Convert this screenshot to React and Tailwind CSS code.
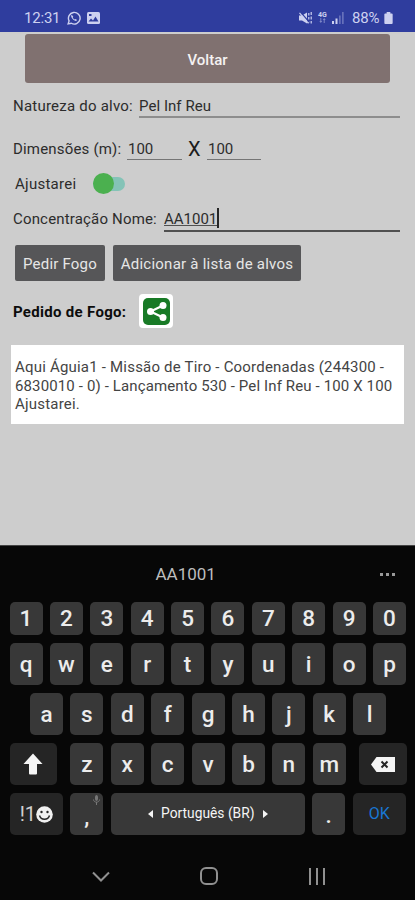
const numberRow = ["1", "2", "3", "4", "5", "6", "7", "8", "9", "0"];
const topRow = ["q", "w", "e", "r", "t", "y", "u", "i", "o", "p"];
const homeRow = ["a", "s", "d", "f", "g", "h", "j", "k", "l"];
const bottomRow = ["z", "x", "c", "v", "b", "n", "m"];

function Key({ children, className = "w-[33px] bg-[#383838]" }) {
  return (
    <div className={`flex h-full shrink-0 items-center justify-center rounded-[5px] text-[22.500px] leading-none font-medium text-[#ececec] ${className}`}>
      {children}
    </div>
  );
}

function StatusBar() {
  return (
    <header className="flex h-8 items-center bg-[#2f3d9e] pt-[3px] pl-6 text-[#cdd1f0]">
      <span className="w-[43px] pt-px text-[15px] leading-none tracking-[-0.200px]">12:31</span>
      <svg className="h-[14px] w-[14px]" viewBox="0 0 24 24" fill="none" stroke="currentColor" strokeWidth="2.4">
        <path d="M2 22l1.6-5A10 10 0 1 1 7.4 21Z" />
        <path d="M8.2 6.5 7 8.3c.3 4.200 4.300 8.300 8.500 8.700l1.800-1.500-2.800-2-1.300 1.100c-1.500-.6-2.700-1.900-3.400-3.400l1-1.300Z" fill="currentColor" stroke="none" />
      </svg>
      <svg className="ml-[6px] h-[12px] w-[13px]" viewBox="0 0 13 12">
        <rect width="13" height="12" rx="1.500" fill="currentColor" />
        <path d="M1.500 9.500 4 6.500l2 2 2.500-4 3 5Z" fill="#2f3d9e" />
        <rect x="2" y="2" width="2.500" height="2" fill="#2f3d9e" />
      </svg>
      <svg className="ml-[199px] h-[12px] w-[13px]" viewBox="0 0 13 12" fill="currentColor">
        <path d="M0 3.500h3L8 .5v11L3 8.500H0Z" />
        <path d="M9 1h1.500v2.500H9zM9 5h1.500v2.500H9zM9 9h1.500v2H9zM11.500 0H13v3h-1.500zM11.500 4.500H13v3h-1.500zM11.500 9H13v2.500h-1.500z" opacity=".8" />
        <path d="m1.500 0 9 10.500" stroke="#2f3d9e" strokeWidth="1.200" />
        <path d="m.5 .8 9 10.500" stroke="currentColor" strokeWidth="1.200" />
      </svg>
      <div className="ml-[6px] flex w-[9px] flex-col items-center">
        <span className="text-[7px] leading-[6px] font-bold">4G</span>
        <svg className="h-[5px] w-[7px] opacity-50" viewBox="0 0 7 5" fill="currentColor">
          <path d="M1.300 0h1v3h1L1.800 5 .3 3h1zM4.700 5h1V2h1L5.200 0 3.700 2h1z" />
        </svg>
      </div>
      <svg className="ml-[5px] h-[12px] w-[12px]" viewBox="0 0 12 12" fill="currentColor">
        <path d="M0 9h2v3H0zM3.500 6.500h2V12h-2z" />
        <path d="M7 3.500h1.700V12H7zM10 0h1.700v12H10z" opacity=".35" />
      </svg>
      <span className="ml-[8px] w-[32px] pt-px text-[15px] leading-none tracking-[-0.200px]">88%</span>
      <svg className="h-[12px] w-[9px]" viewBox="0 0 9 13" fill="currentColor">
        <path d="M2.500 0h4v1.500H8A1 1 0 0 1 9 2.500V12a1 1 0 0 1-1 1H1a1 1 0 0 1-1-1V2.500a1 1 0 0 1 1-1h1.500Z" />
      </svg>
    </header>
  );
}

function TargetForm() {
  return (
    <main className="h-[513px] bg-[#cdcdcd] pt-[2px] text-[15px] leading-[22px] text-[#2c2c2c]">
      <button className="ml-[25px] block h-[49px] w-[365px] rounded-[3px] bg-[#807170] pt-[3px] text-[15px] font-medium text-[#f5f2f2]">Voltar</button>

      <div className="mt-[12px] flex h-[23px] pl-[13px]">
        <span className="w-[126px] tracking-[0.220px] whitespace-nowrap">Natureza do alvo:</span>
        <div className="h-[23px] w-[261px] border-b-2 border-[#8d8d8d] tracking-[0.050px]">Pel Inf Reu</div>
      </div>

      <div className="mt-[20px] flex h-[22px] pl-[13px]">
        <span className="w-[114px] tracking-[0.180px] whitespace-nowrap">Dimensões (m):</span>
        <div className="w-[55px] border-b border-[#757575] pl-[1px]">100</div>
        <span className="w-[25px] pl-[6px] text-[20px] text-[#1c1c1c]">X</span>
        <div className="w-[54px] border-b border-[#757575] pl-[1px]">100</div>
      </div>

      <div className="mt-[12px] flex h-[23px] items-center pl-[15px]">
        <span className="w-[78px] tracking-[0.260px]">Ajustarei</span>
        <div className="flex h-[14px] w-[32px] items-center rounded-full bg-[#84c3b7]">
          <div className="h-[21px] w-[21px] shrink-0 rounded-full bg-[#4bb04f]" />
        </div>
      </div>

      <div className="mt-[13px] flex h-[24px] pl-[13px]">
        <span className="w-[151px] tracking-[0.170px] whitespace-nowrap">Concentração Nome:</span>
        <div className="flex w-[236px] border-b-2 border-[#505050]">
          <span className="h-[18px] border-b border-[#505050]">AA1001</span>
          <span className="h-[20px] w-[1.500px] bg-[#262626]" />
        </div>
      </div>

      <div className="mt-[13px] flex h-[36px] gap-2 pl-[15px] text-[#e6e6e6]">
        <button className="w-[90px] rounded-[2px] bg-[#565658] pt-[2px] tracking-[0.200px] whitespace-nowrap">Pedir Fogo</button>
        <button className="w-[188px] rounded-[2px] bg-[#565658] pt-[2px] tracking-[0.240px] whitespace-nowrap">Adicionar à lista de alvos</button>
      </div>

      <div className="mt-[13px] flex h-[34px] items-center pl-[13px]">
        <span className="w-[126px] pt-[2px] font-bold tracking-[0.300px] whitespace-nowrap text-[#0c0c0c]">Pedido de Fogo:</span>
        <div className="flex h-[34px] w-[34px] items-center justify-center rounded-[4px] bg-white">
          <svg className="h-[27px] w-[27px]" viewBox="0 0 27 27">
            <rect width="27" height="27" rx="5" fill="#187a26" />
            <path d="M20 7.500 7.500 13.500 20 19.500" fill="none" stroke="#fff" strokeWidth="2.200" />
            <circle cx="20" cy="7.500" r="3.500" fill="#fff" />
            <circle cx="7.500" cy="13.500" r="3.500" fill="#fff" />
            <circle cx="20" cy="19.500" r="3.500" fill="#fff" />
          </svg>
        </div>
      </div>

      <div className="mt-[17px] ml-[11px] h-[79px] w-[393px] bg-white pt-[13px] pl-[4px] text-[15px] leading-[18.500px] whitespace-nowrap text-[#444]">
        <p className="tracking-[0.200px]">Aqui Águia1 - Missão de Tiro - Coordenadas (244300 -</p>
        <p className="tracking-[0.130px]">6830010 - 0) - Lançamento 530 - Pel Inf Reu - 100 X 100</p>
        <p className="tracking-[0.200px]">Ajustarei.</p>
      </div>
    </main>
  );
}

function Keyboard() {
  return (
    <section className="h-[355px] border-t border-[#444] bg-[#070707] pl-[9.500px]">
      <div className="flex h-[56px] items-center pt-px">
        <span className="ml-[146px] w-[224px] text-[17px] text-[#bdbdbd]">AA1001</span>
        <div className="flex gap-[3px] pb-px">
          <i className="h-[3px] w-[3px] bg-[#999]" />
          <i className="h-[3px] w-[3px] bg-[#999]" />
          <i className="h-[3px] w-[3px] bg-[#999]" />
        </div>
      </div>
      <div className="flex h-[33px] gap-[7.400px]">
        {numberRow.map((k) => <Key key={k}>{k}</Key>)}
      </div>
      <div className="mt-[8px] flex h-[42px] gap-[7.400px]">
        {topRow.map((k) => <Key key={k}>{k}</Key>)}
      </div>
      <div className="mt-[8px] flex h-[42px] gap-[7.400px] pl-[20.500px]">
        {homeRow.map((k) => <Key key={k}>{k}</Key>)}
      </div>
      <div className="mt-[8px] flex h-[42px] gap-[7.400px]">
        <Key className="mr-[6px] w-[47.500px] bg-[#252525]">
          <svg className="h-[22px] w-[20px]" viewBox="0 0 20 22" fill="#f5f5f5"><path d="M10 .5 19.500 11H14v9.500a1 1 0 0 1-1 1H7a1 1 0 0 1-1-1V11H.5Z" /></svg>
        </Key>
        {bottomRow.map((k) => <Key key={k}>{k}</Key>)}
        <Key className="ml-[6px] w-[47.500px] bg-[#252525]">
          <svg className="h-[15px] w-[24px]" viewBox="0 0 24 15">
            <path d="M0 7.500 5.500 0H24v15H5.500Z" fill="#f5f5f5" />
            <path d="m10.500 4.500 6 6m0-6-6 6" stroke="#252525" strokeWidth="2" />
          </svg>
        </Key>
      </div>
      <div className="mt-[8px] flex h-[42px] gap-[7.400px]">
        <Key className="w-[53.500px] bg-[#252525]">
          <span className="text-[20px] font-normal tracking-[-0.300px] text-[#d0d0d0]">!1</span>
          <svg className="h-[17px] w-[17px]" viewBox="0 0 17 17">
            <circle cx="8.500" cy="8.500" r="8.300" fill="#f0f0f0" />
            <circle cx="5.500" cy="6" r="1.200" fill="#252525" />
            <circle cx="11.500" cy="6" r="1.200" fill="#252525" />
            <path d="M3.500 9.500c1.500 5 8.500 5 10 0" fill="none" stroke="#252525" strokeWidth="1.500" />
          </svg>
        </Key>
        <Key className="relative w-[33px] bg-[#383838]">
          <span className="pt-[6px]">,</span>
          <svg className="absolute top-[2px] right-[3px] h-[10px] w-[7px]" viewBox="0 0 7 10" fill="none" stroke="#777">
            <rect x="2.500" y=".5" width="2" height="5" rx="1" fill="#777" />
            <path d="M.5 4.500C.5 8 6.500 8 6.500 4.500M3.500 7v3" />
          </svg>
        </Key>
        <Key className="w-[194px] gap-[8px] bg-[#383838]">
          <svg className="h-[8px] w-[5px]" viewBox="0 0 5 8" fill="#f5f5f5"><path d="M5 0v8L0 4Z" /></svg>
          <span className="text-[13.800px] font-normal text-[#f5f5f5]">Português (BR)</span>
          <svg className="h-[8px] w-[5px]" viewBox="0 0 5 8" fill="#f5f5f5"><path d="M0 0v8l5-4Z" /></svg>
        </Key>
        <Key><span className="pt-[3px]">.</span></Key>
        <Key className="w-[53.500px] bg-[#252525]"><span className="text-[16px] font-normal text-[#1976d2]">OK</span></Key>
      </div>
      <nav className="mt-[32px] flex h-[18px] items-center pl-[82.500px]">
        <svg className="h-[11px] w-[18px]" viewBox="0 0 18 11" fill="none" stroke="#909090" strokeWidth="2"><path d="m1 1.500 8 8 8-8" /></svg>
        <div className="ml-[90px] h-[18px] w-[18px] rounded-[6px] border-2 border-[#909090]" />
        <div className="ml-[91px] flex h-[17px] gap-[5px]">
          <i className="w-[2px] bg-[#909090]" />
          <i className="w-[2px] bg-[#909090]" />
          <i className="w-[2px] bg-[#909090]" />
        </div>
      </nav>
    </section>
  );
}

export default function App() {
  return (
    <div className="h-[900px] w-[415px] overflow-hidden bg-[#070707] font-['Roboto',sans-serif]">
      <StatusBar />
      <TargetForm />
      <Keyboard />
    </div>
  );
}
